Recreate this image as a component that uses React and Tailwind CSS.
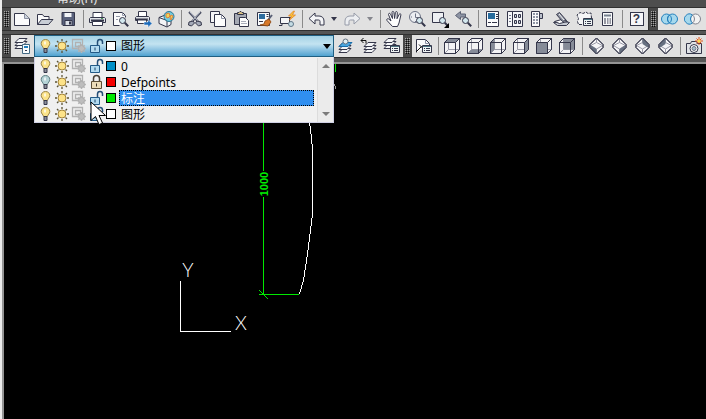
import { useState } from "react";

// shared frame for all toolbar icons
function Icon({ children }) {
  return (
    <svg
      width="17"
      height="18"
      viewBox="0 0 17 18"
      fill="none"
      stroke="#34364a"
      aria-hidden="true"
    >
      {children}
    </svg>
  );
}

// small magnifier used in preview and zoom icons
function Lens() {
  return (
    <>
      <circle cx="10.5" cy="10.5" r="3" fill="#d3e8ee" />
      <path d="M12.8 12.8l3.4 3.4" strokeWidth="2" />
    </>
  );
}

// little list panel in the corner of manager icons
function Panel() {
  return (
    <>
      <path d="M7.5 8.5h9v7h-9z" fill="#eef4f4" />
      <path d="M8 9.5h8" stroke="#4b7482" />
      <path d="M9 11.5h1M11 11.5h4M9 13.5h1M11 13.5h4" />
    </>
  );
}

function Sheets({ y = 0, x = 0 }) {
  return (
    <g transform={`translate(${x} ${y})`} fill="#f4f6f8">
      <path d="M1 11.5l4-4h8l-4 4z" />
      <path d="M1 8.5l4-4h8l-4 4z" />
      <path d="M1 5.5l4-4h8l-4 4z" />
    </g>
  );
}

// =========================
// CUBES FOR THE VIEW TOOLBAR
// =========================
const cubeFaces = {
  top: "M.5 5.5l4-4h11l-4 4z",
  bottom: "M.5 16.5l4-4h11l-4 4z",
  left: "M.5 5.5l4-4v11l-4 4z",
  right: "M11.5 5.5l4-4v11l-4 4z",
  front: "M.5 5.5h11v11h-11z",
  back: "M4.5 1.5h11v11h-11z",
};

function Cube({ face }) {
  return (
    <Icon>
      <path d="M.5 5.5l4-4h11v11l-4 4h-11z" fill="#f3f3f5" />
      <path d="M4.5 1.5v11h11M4.5 12.5l-4 4" stroke="#9a9ba8" />
      <path d={cubeFaces[face]} fill="#858b98" stroke="none" />
      <path d="M.5 5.5l4-4h11v11l-4 4h-11zM.5 5.5h11v11M11.5 5.5l4-4" />
    </Icon>
  );
}

const isoFaces = {
  sw: "M2.5 8l6 4v5l-6-6z",
  se: "M14.5 8l-6 4v5l6-6z",
  ne: "M8.5 1l6 6v4l-6-4z",
  nw: "M8.5 1l-6 6v4l6-4z",
};

function IsoCube({ face }) {
  return (
    <Icon>
      <path d="M8.5 1l6.5 6.500v3l-6.500 6.500-6.500-6.500v-3z" fill="#f5f5f7" />
      <path d="M2.500 8.500l6-3 6 3-6 3.500zM8.500 1v4.500M8.500 12v5" stroke="#9a9ba8" />
      <path d={isoFaces[face]} fill="#667080" stroke="none" />
      <path d="M8.500 1l6.500 6.500v3l-6.500 6.500-6.500-6.500v-3z" />
    </Icon>
  );
}

const icons = {
  new: (
    <Icon>
      <path d="M.5 3.5h10l5 5v7H.5z" fill="#fbfbfc" />
      <path d="M10.5 3.5v5h5" fill="#ccd3dc" stroke="#8b90a2" />
    </Icon>
  ),
  open: (
    <Icon>
      <path d="M.5 14.5v-10h5l1.500 2h5v3" fill="#fafafa" />
      <path d="M.5 14.500l4-5h11.500l-4.500 5z" fill="#c9ced6" />
    </Icon>
  ),
  save: (
    <Icon>
      <path d="M2 2.500h12.500v13h-11.500l-1-1z" fill="#59617c" />
      <path d="M4.500 3h7v4h-7z" fill="#f3f5f8" stroke="none" />
      <path d="M5 10.500h7v5h-7z" fill="#dce0e8" stroke="#34364a" />
      <path d="M9 11.500h2v3h-2z" fill="#34364a" stroke="none" />
    </Icon>
  ),
  print: (
    <Icon>
      <path d="M4 7.500v-5h9v5" fill="#fff" />
      <path d="M1.500 7.500h14l1 1v4h-16v-4z" fill="#dfe2e7" />
      <path d="M3.500 11.500h10v4h-10z" fill="#fff" />
      <path d="M2 10.500h13" strokeWidth="2" />
      <path d="M12 8.500h2" stroke="#4f9a5a" />
    </Icon>
  ),
  preview: (
    <Icon>
      <path d="M7.500 15.500h-6v-13h9l3 3v2" fill="#fbfbfc" />
      <path d="M10.500 2.500v3h3M4 6.500h4M4 9.500h2" stroke="#9398a8" />
      <Lens />
    </Icon>
  ),
  plot: (
    <Icon>
      <path d="M3.500 6.500v-5h8v5" fill="#fff" />
      <path d="M1.500 6.500h12l1 1v3h-14v-3z" fill="#dfe2e7" />
      <path d="M2.500 9.500h9v4h-9z" fill="#fff" />
      <path d="M1 9.500h12" strokeWidth="2" />
      <path d="M9 12h4v-2.500l4 4-4 4v-2.500h-4z" fill="#1c6bbb" stroke="#fff" strokeWidth=".5" />
    </Icon>
  ),
  publish: (
    <Icon>
      <path d="M1 7.500l5-2 7 3v6l-4 2.500-8-3.500z" fill="#f3f4f6" />
      <path d="M1 7.500l8 3v6M9 10.500l4-2" />
      <circle cx="11" cy="6.500" r="5" fill="#71cde0" stroke="#2a7796" />
      <path d="M8 4l3-1 1 3-2 2-2-1zM13 5l2 1-2 4-1-2z" fill="#eed657" stroke="#e0823a" />
    </Icon>
  ),
  cut: (
    <Icon>
      <path d="M2 2l9 9.500M14 2L5 11.500" strokeWidth="2" stroke="#4b4f63" />
      <path d="M3 2l8 9M13 2l-8 9" stroke="#c4c9d4" />
      <path d="M6 11l-4 1-.5 3 3 1 3-3zM10 11l4 1 .5 3-3 1-3-3z" fill="#a5abb9" />
    </Icon>
  ),
  copy: (
    <Icon>
      <path d="M.5 1.500h9v11h-9z" fill="#f6f6f8" />
      <path d="M4.500 4.500h7l4 4v8h-11z" fill="#fdfdfd" />
      <path d="M11.500 4.500v4h4" stroke="#8b90a2" />
    </Icon>
  ),
  paste: (
    <Icon>
      <path d="M1.500 3.500h12v11h-12z" fill="#a5a9b3" />
      <path d="M4.500 4.500v-2h1.500l1-1h1l1 1h1.500v2z" fill="#d9c084" />
      <path d="M6.500 7.500h6l3 3v6h-9z" fill="#fdfdfd" />
      <path d="M8 11.500h5M8 13.500h6" stroke="#a9adba" />
    </Icon>
  ),
  match: (
    <Icon>
      <path d="M1.500 2.500h12v13h-12z" fill="#fafbfc" />
      <path d="M3 4h6v5H3z" fill="#2d6d9f" stroke="none" />
      <path d="M10.500 4.500h2M10.500 6.500h2M3 11.500h4" />
      <path d="M16 5l-4 5" strokeWidth="2" stroke="#596076" />
      <path d="M9 11l4-2 2 3-3 4-8-1 4-1z" fill="#d77727" stroke="#86420f" strokeWidth=".8" />
    </Icon>
  ),
  block: (
    <Icon>
      <path d="M1.500 7.500h9v6h-9z" fill="#f4f5f7" />
      <path d="M0 15.500h3v-2M10 7.500h2" />
      <circle cx="12" cy="14" r="2.500" fill="#c5dce4" stroke="#627789" />
      <path d="M14.500 1l-5 5h3l-2 4 6-5h-3l2-4z" fill="#fbc63a" stroke="#e0781c" strokeWidth=".7" />
    </Icon>
  ),
  undo: (
    <Icon>
      <path d="M1 8.500l6-5.500v3h4c3 0 5 2 5 5v4h-4v-3.500c0-1-.5-1.500-1.500-1.500H7v4z" fill="#f4f5f7" />
    </Icon>
  ),
  redo: (
    <Icon>
      <path d="M16 8.500L10 3v3H6c-3 0-5 2-5 5v4h4v-3.500c0-1 .5-1.500 1.500-1.500H10v4z" fill="#eceef1" stroke="#969ba8" />
    </Icon>
  ),
  hand: (
    <Icon>
      <path
        d="M6.500 16.500l-5.500-6c-.8-1 .5-2.500 1.700-1.500L5 11 2.500 4.500c-.2-1.300 1.500-1.700 2-.4L6.500 8.500 6 2.500c0-1.500 1.700-1.500 1.900 0l.7 6 .8-6c.2-1.400 2-1.200 1.900.2l-.3 6 2.200-4.400c.6-1 2-.5 1.700.7l-1.900 8-1.500 3.500z"
        fill="#fdfdfd"
      />
    </Icon>
  ),
  zoomLive: (
    <Icon>
      <circle cx="6" cy="7" r="5.500" fill="#eceef2" stroke="#6d7385" />
      <path d="M6.500 3.500v4h3M2 7h1M6.500 11v1" stroke="#6d7385" />
      <Lens />
    </Icon>
  ),
  zoomWindow: (
    <Icon>
      <path d="M.5 2.500h11v10h-11z" fill="#eef0f3" />
      <Lens />
      <path d="M17 13v5h-5z" fill="#000" stroke="none" />
    </Icon>
  ),
  zoomPrev: (
    <Icon>
      <path d="M.5 5.500l5-4v2.500h5v3h-5v2.500z" fill="#8d94a4" stroke="#5d6375" />
      <Lens />
    </Icon>
  ),
  properties: (
    <Icon>
      <path d="M2.500 1.500h12v15h-12z" fill="#fbfbfc" />
      <path d="M4 3h7v6H4z" fill="#276b9c" stroke="none" />
      <path d="M12 4.500h2M12 6.500h2M12 8.500h2M4 12.500h3M8 12.500h5" />
    </Icon>
  ),
  designCenter: (
    <Icon>
      <path d="M.5 1.500h15v15H.5z" fill="#f7f8fa" />
      <path d="M5.500 1.500v15" />
      <path d="M2 5.500h2M2 8.500h2M2 11.500h2" stroke="#6e7487" />
      <path d="M7.500 4.500h2v3h-2zM11.500 4.500h2v3h-2zM7.500 10.500h2v3h-2zM11.500 10.500h2v3h-2z" fill="#c6ced8" />
    </Icon>
  ),
  palettes: (
    <Icon>
      <path d="M1.500 1.500h8v15h-8z" fill="#fafafb" />
      <path d="M9.500 3.500h3v5h-3z" fill="#b9bfca" />
      <path d="M3 4h2M6 4h2M3 7h2M6 7h2M3 10h2M6 10h2M3 13h2M6 13h2" strokeWidth="2" stroke="#8e95a5" />
    </Icon>
  ),
  sheetSet: (
    <Icon>
      <path d="M.5 12.500l11-1 5 1-3 3h-9z" fill="#c6cad2" />
      <path d="M1.500 11.500l7-2 6 2-8 2z" fill="#fff" />
      <path d="M3.500 4.500l3-2 7 8-4 1z" fill="#9096a3" />
      <path d="M6 4l5 6" stroke="#f3f3f3" />
    </Icon>
  ),
  markup: (
    <Icon>
      <path d="M6 14.500H2.500l-1-3 1-3-1.500-3.500 3-2.500 3 1 3-1.500 2 1.500 3-.5.5 5" strokeDasharray="3 1" fill="#f5f6f7" />
      <Panel />
    </Icon>
  ),
  calc: (
    <Icon>
      <path d="M3.500 2.500h10v13h-10z" fill="#f8f9fa" />
      <path d="M5 5.500h7" strokeWidth="2" stroke="#76808f" />
      <path d="M5 9h2M8 9h1.500M10.500 9H12M5 11h2M8 11h1.500M10.500 11H12M5 13h2M8 13h1.500M10.500 13H12" />
    </Icon>
  ),
  union: (
    <Icon>
      <circle cx="5.500" cy="9" r="5" fill="#a5d8ed" stroke="#2480bd" />
      <circle cx="11.500" cy="9" r="5" fill="#a5d8ed" stroke="#2480bd" />
      <path d="M8.500 5a5 5 0 000 8 5 5 0 000-8z" stroke="#2480bd" />
    </Icon>
  ),
  subtract: (
    <Icon>
      <circle cx="11.500" cy="9" r="5" fill="#f3f3f3" stroke="#80838f" />
      <path d="M8.500 5a5 5 0 100 8 5 5 0 010-8z" fill="#a5d8ed" stroke="#2480bd" />
      <path d="M8.500 5a5 5 0 010 8" stroke="#80838f" />
    </Icon>
  ),
  layerManager: (
    <Icon>
      <Sheets />
      <path d="M8.500 7.500h7v9h-7z" fill="#fafcfd" stroke="#426a85" />
      <path d="M10 10h4" strokeWidth="2" stroke="#2480bd" />
      <path d="M11 13.500h2" />
    </Icon>
  ),
  makeCurrent: (
    <Icon>
      <Sheets y={4} x={1} />
      <path d="M2 9.500l4-4h9l-4 4z" fill="#4aa6e0" stroke="#176caa" />
      <circle cx="8.500" cy="4.500" r="2.500" fill="#dfeef3" stroke="#65717f" />
    </Icon>
  ),
  layerPrevious: (
    <Icon>
      <Sheets y={4} x={3} />
      <path d="M1 3.500h5v3M3.500 1L1 3.500 3.500 6" stroke="#111" />
    </Icon>
  ),
  layerStates: (
    <Icon>
      <Sheets />
      <Panel />
    </Icon>
  ),
  namedViews: (
    <Icon>
      <path d="M1.500 15.500v-13h9l4 4v2" fill="#fafafb" />
      <path d="M10.500 2.500v4h4" stroke="#8b90a2" />
      <path d="M1 15l5-5 3-1M4 7.500l3 3" stroke="#111" />
      <Panel />
    </Icon>
  ),
  camera: (
    <Icon>
      <path d="M.5 6.500h4l1-2h5l1 2h4v10H.5z" fill="#dfe2e6" />
      <circle cx="8" cy="11.500" r="4" fill="#fff" />
      <circle cx="8" cy="11.500" r="2" fill="#a6bfca" stroke="#6e7487" />
      <path d="M13 0v8M9 4h8M10.500 1.500l5 5M15.500 1.500l-5 5" stroke="#e2521b" />
      <circle cx="13" cy="4" r="1.500" fill="#ffdc48" stroke="none" />
    </Icon>
  ),
};

function ToolButton({ label, children }) {
  return (
    <button
      type="button"
      aria-label={label}
      className="flex h-[22px] w-[23px] shrink-0 items-center justify-center"
    >
      {children}
    </button>
  );
}

function Separator() {
  return (
    <div className="flex w-[6px] shrink-0 justify-center">
      <div className="my-0.5 w-px bg-[#8a8a8a]" />
    </div>
  );
}

function Grip({ id }) {
  return (
    <div className="flex w-[9px] shrink-0 items-center justify-center bg-[#484848]">
      <svg width="5" height="16" aria-hidden="true">
        <pattern id={id} width="2" height="2" patternUnits="userSpaceOnUse">
          <path d="M0 0h1v1H0z" fill="#a4a4a4" />
          <path d="M1 1h1v1H1z" fill="#0c0c0c" />
        </pattern>
        <rect width="5" height="16" fill={`url(#${id})`} />
      </svg>
    </div>
  );
}

function HistoryArrow({ label, color }) {
  return (
    <button
      type="button"
      aria-label={label}
      className="flex w-[13px] shrink-0 items-center justify-center"
    >
      <svg width="7" height="4" viewBox="0 0 7 4" aria-hidden="true">
        <path d="M0 0h6L3 4z" fill={color} />
      </svg>
    </button>
  );
}

// =========================
// LAYER STATE ICONS
// =========================
function Bulb({ on }) {
  return (
    <svg width="16" height="16" viewBox="0 0 16 16" aria-hidden="true">
      <path
        d="M8.500 1.500c-2.600 0-4.300 1.800-4.300 4 0 2.200 2 3 2.300 5h4c.3-2 2.300-2.800 2.300-5 0-2.200-1.700-4-4.300-4z"
        fill={on ? "#fbe38a" : "#b5d3d6"}
        stroke={on ? "#9a8344" : "#5c7c80"}
      />
      <path d="M7 3.500h2v3H7z" fill="#fff" opacity=".7" />
      <path d="M7 10.500h3v4H7z" fill="#8a8d98" stroke="#34364a" />
    </svg>
  );
}

function Sun() {
  return (
    <svg width="16" height="16" viewBox="0 0 16 16" aria-hidden="true">
      <path
        d="M8 1v2M8 13v2M1 8h2M13 8h2M3 3l1.500 1.500M11.500 11.500L13 13M13 3l-1.500 1.500M4.500 11.500L3 13"
        stroke="#5b5335"
        strokeWidth="1.300"
      />
      <circle cx="8" cy="8" r="4" fill="#fde389" stroke="#a3843a" />
    </svg>
  );
}

function Viewport() {
  return (
    <svg width="16" height="16" viewBox="0 0 16 16" fill="none" aria-hidden="true">
      <path d="M1.500 1.500h10v9h-10zM4.500 4.500h5v4h-5z" stroke="#b1b1b1" strokeWidth="1.300" />
      <path d="M10.500 6v9M6 10.500h9M7.300 7.300l6.400 6.400M13.700 7.300l-6.400 6.400" stroke="#b5b5b5" strokeWidth="1.500" />
      <circle cx="10.500" cy="10.500" r="3" fill="#bdbdbd" stroke="#adadad" />
    </svg>
  );
}

function Lock({ locked }) {
  if (locked) {
    return (
      <svg width="16" height="16" viewBox="0 0 16 16" fill="none" aria-hidden="true">
        <path d="M5.500 7.500v-3c0-4 6-4 6 0v3" stroke="#4a4238" strokeWidth="1.500" />
        <path d="M3.500 7.500h10v7h-10z" fill="#ecdcb8" stroke="#5b4d35" />
        <path d="M8.500 9.500v3" stroke="#3b3122" />
      </svg>
    );
  }
  return (
    <svg width="16" height="16" viewBox="0 0 16 16" fill="none" aria-hidden="true">
      <path d="M9.500 7V4c0-3.500 5-3.500 5 0v2" stroke="#234e77" strokeWidth="1.500" />
      <path d="M2.500 7.500h9v7h-9z" fill="#b4dbf0" stroke="#235a86" />
      <path d="M7 9.500v3" stroke="#174268" />
    </svg>
  );
}

function LayerState({ layer }) {
  return (
    <div className="flex w-[69px] shrink-0 gap-px">
      <Bulb on={layer.on} />
      <Sun />
      <Viewport />
      <Lock locked={layer.locked} />
    </div>
  );
}

const swatches = {
  blue: "bg-[#0090c8]",
  red: "bg-[#f40000]",
  green: "bg-[#00e800]",
  white: "bg-white",
};

const layers = [
  { name: "0", color: "blue", on: true, locked: false },
  { name: "Defpoints", color: "red", on: false, locked: true },
  { name: "标注", color: "green", on: true, locked: false },
  { name: "图形", color: "white", on: true, locked: false },
];

function Swatch({ color }) {
  return <span className={`h-2.5 w-2.5 shrink-0 border border-black ${swatches[color]}`} />;
}

function LayerCombo() {
  const [current, setCurrent] = useState("图形");
  const [active, setActive] = useState("标注");
  const layer = layers.find((item) => item.name === current);

  return (
    <div className="relative z-10 w-[300px] shrink-0 text-[12px] leading-4 text-black">
      <div className="flex h-[22px] items-center border border-[#1f5f82] bg-linear-to-b from-[#a3d2e5] via-[#c3e3f1] via-40% to-[#4fa2d0] pl-0.5">
        <LayerState layer={layer} />
        <Swatch color={layer.color} />
        <select
          aria-label="图层"
          value={current}
          onChange={(e) => setCurrent(e.target.value)}
          className="h-5 min-w-0 flex-1 appearance-none bg-transparent pl-[5px] leading-5 outline-none"
        >
          {layers.map((item) => (
            <option key={item.name}>{item.name}</option>
          ))}
        </select>
        <svg width="8" height="5" viewBox="0 0 8 5" className="mr-0.5" aria-hidden="true">
          <path d="M0 0h8L4 5z" fill="#000" />
        </svg>
      </div>

      {/* open list */}
      <div className="absolute top-full left-0 flex w-full border border-t-0 border-[#cfd0e4] bg-[#f0f0f0] pt-px">
        <ul role="listbox" aria-label="图层" className="flex-1 pr-[3px]">
          {layers.map((item) => (
            <li
              key={item.name}
              role="option"
              aria-selected={item.name === active}
              onMouseEnter={() => setActive(item.name)}
              onClick={() => setCurrent(item.name)}
              className="flex h-4 items-center pl-0.5"
            >
              <LayerState layer={item} />
              <Swatch color={item.color} />
              <span
                className={
                  item.name === active
                    ? "ml-[3px] h-4 flex-1 border border-dotted border-black bg-[#308ff0] pl-px leading-4 text-white"
                    : "ml-[3px] h-4 flex-1 pl-0.5 leading-[18px]"
                }
              >
                {item.name}
              </span>
            </li>
          ))}
        </ul>
        <div className="flex w-4 flex-col items-center justify-between border-l border-[#dcdcdc] bg-[#ebebeb] py-1.5">
          <svg width="8" height="4" viewBox="0 0 8 4" aria-hidden="true">
            <path d="M4 0l4 4H0z" fill="#7b7b7b" />
          </svg>
          <svg width="8" height="4" viewBox="0 0 8 4" aria-hidden="true">
            <path d="M4 4L0 0h8z" fill="#7b7b7b" />
          </svg>
        </div>
      </div>

      {/* mouse pointer */}
      <svg width="17" height="25" viewBox="0 0 17 25" className="absolute top-[66px] left-14" aria-hidden="true">
        <path d="M1 1v18.500l4.500-4 3.500 8 3.500-1.500-3.500-7.500h6.500z" fill="#fff" stroke="#000" />
      </svg>
    </div>
  );
}

function Drawing() {
  return (
    <svg width="702" height="355" viewBox="0 0 702 355" fill="none" className="block">
      {/* dimension */}
      <g stroke="#00e800" shapeRendering="crispEdges">
        <path d="M259.500 50v57M259.500 133v98M255 230.500h40M331.500 0v8" />
        <path d="M255 226l9 9" />
      </g>
      <text
        x="264"
        y="120"
        transform="rotate(-90 264 120)"
        textAnchor="middle"
        fill="#00f000"
        className="font-['Liberation_Sans',sans-serif] text-[11px] font-bold"
      >
        1000
      </text>
      {/* profile */}
      <path
        d="M305.500 58l2 16 1 12v64l-2 16-3 24-4 26-4 14"
        stroke="#fff"
        shapeRendering="crispEdges"
      />
      <path d="M330.500 20v2M331.500 22v3" stroke="#9a9a9a" />
      {/* ucs icon */}
      <path d="M176.500 217v50.500h50" stroke="#fff" shapeRendering="crispEdges" />
      <g fill="#fff" textAnchor="middle" className="font-[Lato] text-[19px] font-light">
        <text x="184" y="213">Y</text>
        <text x="237" y="266">X</text>
      </g>
    </svg>
  );
}

export default function App() {
  return (
    <div className="flex h-screen flex-col overflow-hidden border-l-2 border-[#ececec] bg-[#555555] font-['Noto_Sans','Noto_Sans_CJK_SC',sans-serif]">
      {/* MENU BAR */}
      <div className="flex h-[7px] shrink-0 items-end overflow-hidden bg-[#4e4e4e] pl-[55px] text-[12px] leading-4 text-[#e4e4e4]">
        <a href="#help">帮助(H)</a>
      </div>

      {/* STANDARD TOOLBAR */}
      <div className="flex shrink-0 border-y border-[#303030] bg-[#e1e1e1]">
        <Grip id="grip-standard" />
        <ToolButton label="新建">{icons.new}</ToolButton>
        <ToolButton label="打开">{icons.open}</ToolButton>
        <ToolButton label="保存">{icons.save}</ToolButton>
        <Separator />
        <ToolButton label="打印">{icons.print}</ToolButton>
        <ToolButton label="打印预览">{icons.preview}</ToolButton>
        <ToolButton label="发布">{icons.plot}</ToolButton>
        <ToolButton label="三维打印">{icons.publish}</ToolButton>
        <Separator />
        <ToolButton label="剪切">{icons.cut}</ToolButton>
        <ToolButton label="复制">{icons.copy}</ToolButton>
        <ToolButton label="粘贴">{icons.paste}</ToolButton>
        <ToolButton label="特性匹配">{icons.match}</ToolButton>
        <ToolButton label="块编辑器">{icons.block}</ToolButton>
        <Separator />
        <ToolButton label="放弃">{icons.undo}</ToolButton>
        <HistoryArrow label="放弃列表" color="#34364a" />
        <ToolButton label="重做">{icons.redo}</ToolButton>
        <HistoryArrow label="重做列表" color="#85868d" />
        <Separator />
        <ToolButton label="平移">{icons.hand}</ToolButton>
        <ToolButton label="实时缩放">{icons.zoomLive}</ToolButton>
        <ToolButton label="窗口缩放">{icons.zoomWindow}</ToolButton>
        <ToolButton label="缩放上一个">{icons.zoomPrev}</ToolButton>
        <Separator />
        <ToolButton label="特性">{icons.properties}</ToolButton>
        <ToolButton label="设计中心">{icons.designCenter}</ToolButton>
        <ToolButton label="工具选项板">{icons.palettes}</ToolButton>
        <ToolButton label="图纸集管理器">{icons.sheetSet}</ToolButton>
        <ToolButton label="标记集管理器">{icons.markup}</ToolButton>
        <ToolButton label="快速计算器">{icons.calc}</ToolButton>
        <Separator />
        <ToolButton label="帮助">
          <span className="flex h-3.5 w-3.5 items-center justify-center border border-[#34364a] bg-[#f6f6f8] font-['Liberation_Sans',sans-serif] text-[12px] leading-3 font-bold text-[#34364a]">
            ?
          </span>
        </ToolButton>
        <div className="flex border-l border-[#303030]">
          <Grip id="grip-solids" />
        </div>
        <ToolButton label="并集">{icons.union}</ToolButton>
        <ToolButton label="差集">{icons.subtract}</ToolButton>
      </div>

      {/* LAYERS AND VIEW TOOLBARS */}
      <div className="mt-[3px] flex shrink-0 border-y border-[#303030] bg-[#e1e1e1]">
        <Grip id="grip-layers" />
        <ToolButton label="图层特性管理器">{icons.layerManager}</ToolButton>
        <LayerCombo />
        <ToolButton label="置为当前">{icons.makeCurrent}</ToolButton>
        <ToolButton label="上一个图层">{icons.layerPrevious}</ToolButton>
        <ToolButton label="图层状态管理器">{icons.layerStates}</ToolButton>
        <Grip id="grip-view" />
        <ToolButton label="命名视图">{icons.namedViews}</ToolButton>
        <Separator />
        <ToolButton label="俯视"><Cube face="top" /></ToolButton>
        <ToolButton label="仰视"><Cube face="bottom" /></ToolButton>
        <ToolButton label="左视"><Cube face="left" /></ToolButton>
        <ToolButton label="右视"><Cube face="right" /></ToolButton>
        <ToolButton label="前视"><Cube face="front" /></ToolButton>
        <ToolButton label="后视"><Cube face="back" /></ToolButton>
        <Separator />
        <ToolButton label="西南等轴测"><IsoCube face="sw" /></ToolButton>
        <ToolButton label="东南等轴测"><IsoCube face="se" /></ToolButton>
        <ToolButton label="东北等轴测"><IsoCube face="ne" /></ToolButton>
        <ToolButton label="西北等轴测"><IsoCube face="nw" /></ToolButton>
        <Separator />
        <ToolButton label="创建相机">{icons.camera}</ToolButton>
      </div>

      {/* DRAWING AREA */}
      <main className="mt-1 min-h-0 flex-1 overflow-hidden border-t-2 border-l-2 border-[#949494] bg-black">
        <Drawing />
      </main>
    </div>
  );
}
